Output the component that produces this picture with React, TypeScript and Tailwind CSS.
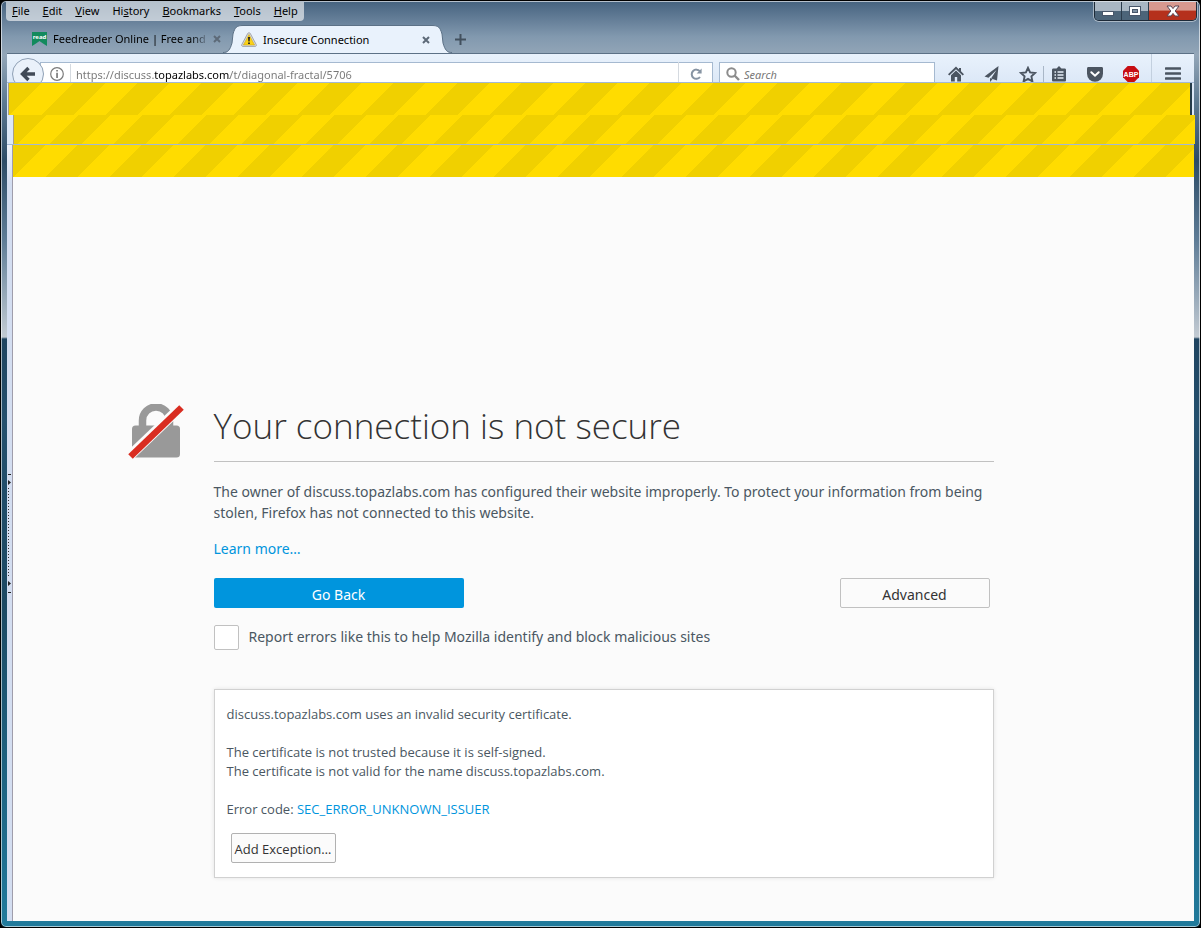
import { useState, type ReactNode } from 'react';

const menuItems = [
  { before: '', key: 'F', after: 'ile' },
  { before: '', key: 'E', after: 'dit' },
  { before: '', key: 'V', after: 'iew' },
  { before: 'Hi', key: 's', after: 'tory' },
  { before: '', key: 'B', after: 'ookmarks' },
  { before: '', key: 'T', after: 'ools' },
  { before: '', key: 'H', after: 'elp' },
];

const MenuBar = () => (
  <nav className="flex h-[19px] items-center gap-[13px] rounded-b-sm bg-white/60 px-[6px] pb-[2px]">
    {menuItems.map((item) => (
      <button key={item.key + item.after} className="text-[11px] leading-4 text-black">
        {item.before}
        <span className="underline">{item.key}</span>
        {item.after}
      </button>
    ))}
  </nav>
);

const WindowControls = () => (
  <div className="flex h-[19px] overflow-hidden rounded-b-[5px] border border-t-0 border-[#1d2a38] shadow-[0_0_0_1px_rgba(255,255,255,0.45)]">
    <button
      aria-label="Minimize"
      className="flex w-[27px] items-center justify-center border-r border-[#2b3b4b] bg-linear-to-b from-[#a9b6c3] from-50% to-[#4c6479] to-50%"
    >
      <svg width="12" height="12" viewBox="0 0 12 12">
        <rect x="0.5" y="6.5" width="11" height="4" fill="#fff" stroke="#48566a" />
      </svg>
    </button>
    <button
      aria-label="Maximize"
      className="flex w-[27px] items-center justify-center border-r border-[#2b3b4b] bg-linear-to-b from-[#a9b6c3] from-50% to-[#4c6479] to-50%"
    >
      <svg width="12" height="12" viewBox="0 0 12 12">
        <rect x="0.5" y="1.5" width="11" height="9" fill="#fff" stroke="#48566a" />
        <rect x="3.5" y="4.5" width="5" height="3" fill="#7d90a2" stroke="#48566a" />
      </svg>
    </button>
    <button
      aria-label="Close"
      className="flex w-[47px] items-center justify-center bg-linear-to-b from-[#d8998f] from-45% to-[#b5301c] to-50%"
    >
      <svg width="14" height="12" viewBox="0 0 14 12">
        <path d="M1 1h4l2 2.600L9 1h4L9.200 6l3.800 5H9L7 8.400 5 11H1l3.800-5z" fill="#fff" stroke="#5b4552" />
      </svg>
    </button>
  </div>
);

const CloseIcon = () => (
  <svg width="8" height="8" viewBox="0 0 8 8">
    <path d="M1 1l6 6M7 1L1 7" stroke="#5d6a78" strokeWidth="2" />
  </svg>
);

const TabBar = () => (
  <div className="flex h-7 items-end">
    <div className="flex h-7 w-[216px] items-center pl-[25px]">
      <svg width="15" height="14" viewBox="0 0 15 14" className="mr-[6px] shrink-0">
        <path d="M0 0h15v14l-4-2.600L7.500 9 4 11.400 0 14z" fill="#128a5d" />
        <text x="7.500" y="7" textAnchor="middle" fontSize="6" fontWeight="700" fill="#fff" fontFamily="Open Sans">
          read
        </text>
      </svg>
      <span className="bg-linear-to-r from-black from-88% to-[#66778a] bg-clip-text text-[11px] leading-4 whitespace-nowrap text-transparent">
        Feedreader Online | Free and
      </span>
      <button aria-label="Close tab" className="mr-[2px] ml-auto">
        <CloseIcon />
      </button>
    </div>
    <svg width="20" height="28" viewBox="0 0 20 28" className="shrink-0">
      <path d="M0 28C5 28 7 25 9 18L10 9C12 2 14 .5 20 .5V28z" fill="#e9f2fc" />
      <path d="M0 27.500C5 27.500 7 25 9 18L10 9C12 2 14 .5 20 .5" fill="none" stroke="#5c7186" />
    </svg>
    <div className="flex h-7 w-[189px] items-center border-t border-[#5c7186] bg-[#e9f2fc]">
      <svg width="16" height="15" viewBox="0 0 16 15" className="-ml-[2px] shrink-0">
        <path d="M8 .7c.6 0 1 .3 1.300.8l5.900 11c.5 1 0 1.900-1.100 1.900H1.900C.8 14.400.3 13.500.8 12.500l5.900-11C7 1 7.400.7 8 .7z" fill="#d9dcdf" stroke="#8a8d91" strokeWidth=".7" />
        <path d="M8 2.400l5.600 10.600H2.400z" fill="#fbd217" stroke="#c39b0a" strokeWidth=".5" />
        <path d="M7 5h2l-.4 4.600H7.400zM7.100 10.400h1.800V12H7.100z" fill="#222" />
      </svg>
      <span className="ml-[6px] flex-1 text-[11px] leading-4 text-black">Insecure Connection</span>
      <button aria-label="Close tab" className="mr-[2px]">
        <CloseIcon />
      </button>
    </div>
    <svg width="20" height="28" viewBox="0 0 20 28" className="shrink-0">
      <path d="M20 28C15 28 13 25 11 18L10 9C8 2 6 .5 0 .5V28z" fill="#e9f2fc" />
      <path d="M20 27.500C15 27.500 13 25 11 18L10 9C8 2 6 .5 0 .5" fill="none" stroke="#5c7186" />
    </svg>
    <button aria-label="New tab" className="flex h-7 w-4 items-center justify-center">
      <svg width="11" height="11" viewBox="0 0 11 11">
        <path d="M5.500 0v11M0 5.500h11" stroke="#42505e" strokeWidth="2" />
      </svg>
    </button>
  </div>
);

const ToolButton = ({ label, children }: { label: string; children: ReactNode }) => (
  <button aria-label={label} className="flex h-6 w-9 items-center justify-center">
    {children}
  </button>
);

const NavBar = () => {
  const [url, setUrl] = useState('https://discuss.topazlabs.com/t/diagonal-fractal/5706');
  const [query, setQuery] = useState('');

  return (
    <div className="flex h-[29px] items-start overflow-hidden border-t border-[#5c7186] bg-linear-to-b from-[#e9f2fc] to-[#dce8f7] pl-[5px]">
      <button
        aria-label="Back"
        className="relative z-10 mt-1 flex h-8 w-8 shrink-0 items-center justify-center rounded-full border border-[#8fa0b5] bg-[#eaf1fa]"
      >
        <svg width="16" height="16" viewBox="0 0 16 16">
          <path d="M8.500 2L2.500 8l6 6M3 8h12" fill="none" stroke="#414a57" strokeWidth="3.400" />
        </svg>
      </button>
      <div className="mt-2 -ml-1 flex h-6 min-w-0 flex-1 items-center border border-[#a5b9d0] bg-white pl-[9px]">
        <svg width="14" height="14" viewBox="0 0 14 14" className="shrink-0">
          <circle cx="7" cy="7" r="6.300" fill="none" stroke="#7b7b7b" strokeWidth="1.200" />
          <path d="M6.200 3h1.700v1.600H6.200zM6.200 5.800h1.700V11H6.200z" fill="#7b7b7b" />
        </svg>
        <span className="mr-[5px] ml-[6px] h-5 w-px shrink-0 bg-[#d5dae0]" />
        <input
          aria-label="Address"
          value={url}
          onChange={(e) => setUrl(e.target.value)}
          className="h-5 min-w-0 flex-1 bg-linear-[90deg,#777_78px,#000_78px,#000_154px,#777_154px] bg-clip-text text-[11px] text-transparent caret-black outline-none"
        />
        <button aria-label="Reload" className="flex h-6 w-[34px] shrink-0 items-center justify-center border-l border-[#d5dae0]">
          <svg width="12" height="12" viewBox="0 0 12 12">
            <path d="M9.800 3.200A4.600 4.600 0 1 0 10 9" fill="none" stroke="#8794a3" strokeWidth="2" />
            <path d="M11.600.4v5H6.600z" fill="#8794a3" />
          </svg>
        </button>
      </div>
      <label className="mt-2 ml-[6px] flex h-6 w-[216px] shrink-0 items-center border border-[#a5b9d0] bg-white pl-[6px]">
        <svg width="14" height="14" viewBox="0 0 14 14">
          <circle cx="5.500" cy="5.500" r="4.200" fill="none" stroke="#8c8c8c" strokeWidth="2" />
          <path d="M8.500 8.500l4.500 4.500" stroke="#8c8c8c" strokeWidth="2.400" />
        </svg>
        <input
          aria-label="Search"
          placeholder="Search"
          value={query}
          onChange={(e) => setQuery(e.target.value)}
          className="ml-1 h-5 w-40 text-[11px] outline-none placeholder:text-[#777] placeholder:italic"
        />
      </label>
      <div className="mt-2 flex shrink-0 items-center pl-[3px]">
        <ToolButton label="Home">
          <svg width="16" height="16" viewBox="0 0 16 16" fill="#4b5561">
            <path d="M8 .5L0 8.300l1.300 1.200L8 3.200l6.700 6.300L16 8.300l-3-3V2h-2v1.400z" />
            <path d="M8 4.600l-5 4.700V15.500h3.800V11h2.400v4.500H13V9.300z" />
          </svg>
        </ToolButton>
        <ToolButton label="Share">
          <svg width="16" height="16" viewBox="0 0 16 16">
            <path d="M14.500 0L.5 10.500l4 1.200L12.500 4 7 12.500l6 2z" fill="#4b5561" />
            <path d="M6 12v4l2.500-2.800z" fill="#4b5561" />
          </svg>
        </ToolButton>
        <ToolButton label="Bookmark this page">
          <svg width="18" height="17" viewBox="0 0 18 17">
            <path d="M9 1.800l2.100 4.600 5 .6-3.700 3.400 1 5L9 12.900l-4.400 2.500 1-5L1.900 7l5-.6z" fill="none" stroke="#4b5561" strokeWidth="1.900" />
          </svg>
        </ToolButton>
        <span className="-mx-[3px] h-4 w-px bg-[#a9b7c7]" />
        <ToolButton label="Show your bookmarks">
          <svg width="14" height="16" viewBox="0 0 14 16">
            <path d="M4.500 2.500L7 0l2.500 2.500h3c1 0 1.500.5 1.500 1.500v10c0 1-.5 1.500-1.500 1.500h-11C.5 15.500 0 15 0 14V4c0-1 .5-1.500 1.500-1.500z" fill="#4b5561" />
            <path d="M2.500 6h1.500M5.500 6h6M2.500 9h1.500M5.500 9h6M2.500 12h1.500M5.500 12h6" stroke="#e6eef8" strokeWidth="1.500" />
          </svg>
        </ToolButton>
        <ToolButton label="Save to Pocket">
          <svg width="16" height="15" viewBox="0 0 16 15">
            <path d="M1.500 0h13c1 0 1.500.6 1.500 1.500v5.300a8 8 0 0 1-16 0V1.500C0 .6.500 0 1.500 0z" fill="#4b5561" />
            <path d="M4.300 5.200L8 8.700l3.700-3.500" fill="none" stroke="#fff" strokeWidth="2" strokeLinecap="round" />
          </svg>
        </ToolButton>
        <ToolButton label="Adblock Plus">
          <svg width="16" height="16" viewBox="0 0 16 16">
            <path d="M4.700 0h6.600L16 4.700v6.600L11.300 16H4.700L0 11.300V4.700z" fill="#c70d12" />
            <text x="8" y="10.800" textAnchor="middle" fontSize="7" fontWeight="700" fill="#fff" fontFamily="Liberation Sans">
              ABP
            </text>
          </svg>
        </ToolButton>
      </div>
      <button aria-label="Open menu" className="ml-[2px] flex h-[38px] w-[43px] shrink-0 items-center justify-center border-l border-[#c3d0df]">
        <svg width="16" height="13" viewBox="0 0 16 13">
          <path d="M1 1.500h14M1 6.500h14M1 11.500h14" stroke="#4b5561" strokeWidth="2.600" strokeLinecap="round" />
        </svg>
      </button>
    </div>
  );
};

const SplitterGrip = () => (
  <svg width="5" height="120" viewBox="0 0 5 120">
    <path d="M1 1.500h3M1 119.500h3" stroke="#222" />
    <path d="M1 7l3 2.500L1 12zM1 108l3 2.500-3 2.500z" fill="#222" />
    <path d="M1.500 15v90" stroke="#333" strokeDasharray="1 2" />
  </svg>
);

const LockIcon = () => (
  <svg width="56" height="56" viewBox="0 0 56 56">
    <path d="M14.500 24V16.500a13.500 13.500 0 0 1 27 0V24" fill="none" stroke="#999" strokeWidth="7.500" />
    <rect x="4" y="21.500" width="48" height="32" rx="3.500" fill="#999" />
    <path d="M0 53.500L54.500 1.500" stroke="#fbfbfb" strokeWidth="10" />
    <path d="M2.500 52.500L53.500 3.500" stroke="#d92d21" strokeWidth="6.500" />
  </svg>
);

const ErrorPage = () => {
  const [report, setReport] = useState(false);

  return (
    <main className="grid flex-1 grid-cols-[1fr_minmax(0,780px)_1fr] bg-[#fbfbfb] pt-[225px] pb-10 text-[14px] leading-[21px] text-[#4a5762]">
      <div className="mt-[2px] mr-[30px] justify-self-end">
        <LockIcon />
      </div>
      <div>
        <h1 className="h-[60px] border-b border-[#c1c1c1] font-['Open_Sans',sans-serif] text-[35px] leading-[48px] font-light text-[#333]">
          Your connection is not secure
        </h1>
        <p className="mt-[19px]">
          The owner of discuss.topazlabs.com has configured their website improperly. To protect your information from
          being stolen, Firefox has not connected to this website.
        </p>
        <p className="mt-[15px]">
          <a href="#learn-more" className="text-[#0095dd]">
            Learn more…
          </a>
        </p>
        <div className="mt-[19px] mr-1 flex justify-between">
          <button className="h-[30px] w-[250px] rounded-xs bg-[#0095dd] pt-[2px] text-white">Go Back</button>
          <button className="h-[30px] w-[150px] rounded-xs border border-[#c1c1c1] bg-[#fbfbfb] pt-[2px] text-[#333]">
            Advanced
          </button>
        </div>
        <div className="mt-[17px] flex items-center">
          <input
            id="report"
            type="checkbox"
            checked={report}
            onChange={(e) => setReport(e.target.checked)}
            className="h-[25px] w-[25px] appearance-none rounded-xs border border-[#c1c1c1] bg-white checked:bg-[#0095dd]"
          />
          <label htmlFor="report" className="ml-[10px] pb-[2px]">
            Report errors like this to help Mozilla identify and block malicious sites
          </label>
        </div>
        <section className="mt-[39px] border border-[#d1d1d1] bg-white px-3 pt-[15px] pb-[14px] font-['Open_Sans',sans-serif] text-[13px] leading-[19px] shadow-[0_0_4px_rgba(0,0,0,0.1)]">
          <p>discuss.topazlabs.com uses an invalid security certificate.</p>
          <p className="mt-[19px]">The certificate is not trusted because it is self-signed.</p>
          <p>The certificate is not valid for the name discuss.topazlabs.com.</p>
          <p className="mt-[19px]">
            Error code:{' '}
            <a href="#error-code" className="text-[#0095dd]">
              SEC_ERROR_UNKNOWN_ISSUER
            </a>
          </p>
          <button className="mt-[14px] ml-1 h-[30px] w-[105px] rounded-xs border border-[#b1b1b1] bg-[#fbfbfb] pt-[2px] text-[#333]">
            Add Exception…
          </button>
        </section>
      </div>
    </main>
  );
};

export default function App() {
  return (
    <div className="flex min-h-screen bg-black font-['Noto_Sans',sans-serif]">
      <div className="flex flex-1 flex-col rounded-[6px] border border-black bg-linear-[180deg,#45627f_0px,#8299af_36px,#93a6b8_54px,#5d7a92_100px,#2c4b66_160px,#5f7d97_240px,#c3cbd3_336px,#1f4460_338px,#24506e_420px,#1c4963_600px,#1f6f90_860px,#217b9c_100%] px-[6px] pb-[6px] shadow-[inset_0_0_0_1px_rgba(255,255,255,0.6)]">
        <header>
          <div className="-ml-px flex h-6 items-start justify-between pt-px">
            <MenuBar />
            <div className="-mr-[3px]">
              <WindowControls />
            </div>
          </div>
          <TabBar />
          <NavBar />
        </header>

        <div className="border-t border-[#a3b8d4] bg-[#dce8f7]">
          <div className="mr-[2px] ml-px h-8 border-r-2 border-l border-[#243b4a] border-l-[#a7a08a] bg-linear-[135deg,#f0d000_25%,#ffdc00_25%,#ffdc00_50%,#f0d000_50%,#f0d000_75%,#ffdc00_75%] bg-size-[64px_64px]" />
          <div className="-mr-px ml-[6px] h-[29px] border-l border-[#a7a08a] bg-linear-[135deg,#f0d000_25%,#ffdc00_25%,#ffdc00_50%,#f0d000_50%,#f0d000_75%,#ffdc00_75%] bg-size-[64px_64px]" />
        </div>

        <div className="flex flex-1 border-t border-[#a3b8d4]">
          <div className="flex w-[6px] items-center border-r border-[#9f9dab] bg-linear-to-b from-[#eef2fa] to-[#d3ddf0] to-5%">
            <SplitterGrip />
          </div>
          <div className="flex min-w-0 flex-1 flex-col">
            <div className="h-8 bg-linear-[135deg,#f0d000_25%,#ffdc00_25%,#ffdc00_50%,#f0d000_50%,#f0d000_75%,#ffdc00_75%] bg-size-[64px_64px]" />
            <ErrorPage />
          </div>
        </div>
      </div>
    </div>
  );
}
